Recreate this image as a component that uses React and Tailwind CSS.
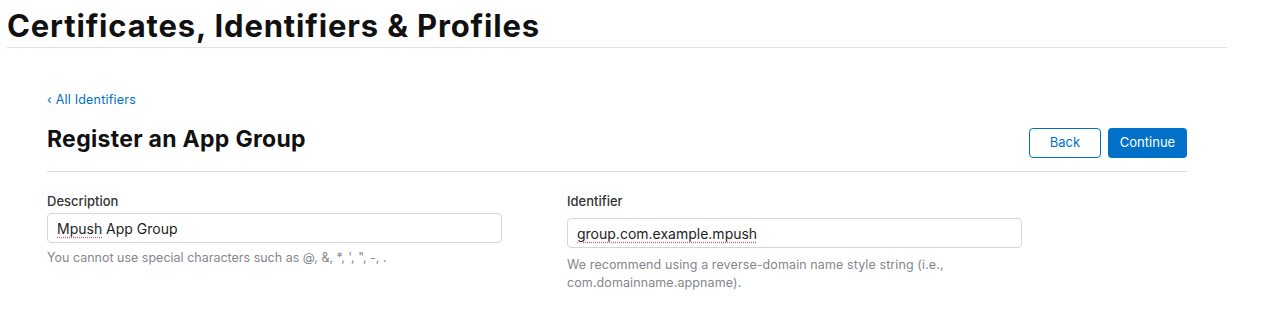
import React from 'react'

export default function App() {
  return (
    <div className="w-[1261px] h-[315px] bg-white overflow-hidden font-['Inter',sans-serif] text-[#1d1d1f]">
      <div className="pl-[7px] pr-[34px]">
        <h1 className="text-[31px] leading-[38px] font-bold tracking-[0.85px] pt-[7px] pb-[2px] text-[#111]">
          Certificates, Identifiers &amp; Profiles
        </h1>
        <div className="h-px bg-[#e2e2e2]"></div>
      </div>

      <div className="ml-[47px] w-[1140px]">
        <a className="block mt-[44px] text-[12.5px] leading-[16px] text-[#0070c9] tracking-[0.2px]">‹ All Identifiers</a>

        <div className="flex items-start justify-between mt-[16px] pb-[13px] border-b border-[#dedede]">
          <h2 className="text-[23px] leading-[30px] font-bold text-[#111] tracking-[0.3px]">Register an App Group</h2>
          <div className="flex gap-[7px] mt-[4px]">
            <button className="w-[72px] h-[30px] rounded-[4px] border border-[#0070c9] text-[#0070c9] text-[13px] bg-white">Back</button>
            <button className="w-[79px] h-[30px] rounded-[4px] bg-[#0070c9] text-white text-[13px]">Continue</button>
          </div>
        </div>

        <div className="flex mt-[20px]">
          <div className="w-[520px]">
            <label className="block text-[13px] leading-[18px] text-[#333] font-medium">Description</label>
            <div className="mt-[3px] w-[455px] h-[30px] border border-[#d6d6d6] rounded-[4px] flex items-center px-[9px] text-[14px] text-[#1d1d1f]">
              <span className="underline decoration-dotted decoration-[#e06060] underline-offset-[3px]">Mpush</span>
              <span>&nbsp;App Group</span>
            </div>
            <p className="mt-[6px] text-[12.5px] leading-[18px] text-[#86868b]">You cannot use special characters such as @, &amp;, *, ', ", -, .</p>
          </div>
          <div className="w-[455px]">
            <label className="block text-[13px] leading-[18px] text-[#333] font-medium">Identifier</label>
            <div className="mt-[8px] w-[455px] h-[30px] border border-[#d6d6d6] rounded-[4px] flex items-center px-[9px] text-[14px] text-[#1d1d1f]">
              <span className="underline decoration-dotted decoration-[#e06060] underline-offset-[3px]">group.com.example.mpush</span>
            </div>
            <p className="mt-[8px] text-[12.5px] leading-[18px] text-[#86868b] tracking-[0.1px]">
              We recommend using a reverse-domain name style string (i.e., com.domainname.appname).
            </p>
          </div>
        </div>
      </div>
    </div>
  )
}
